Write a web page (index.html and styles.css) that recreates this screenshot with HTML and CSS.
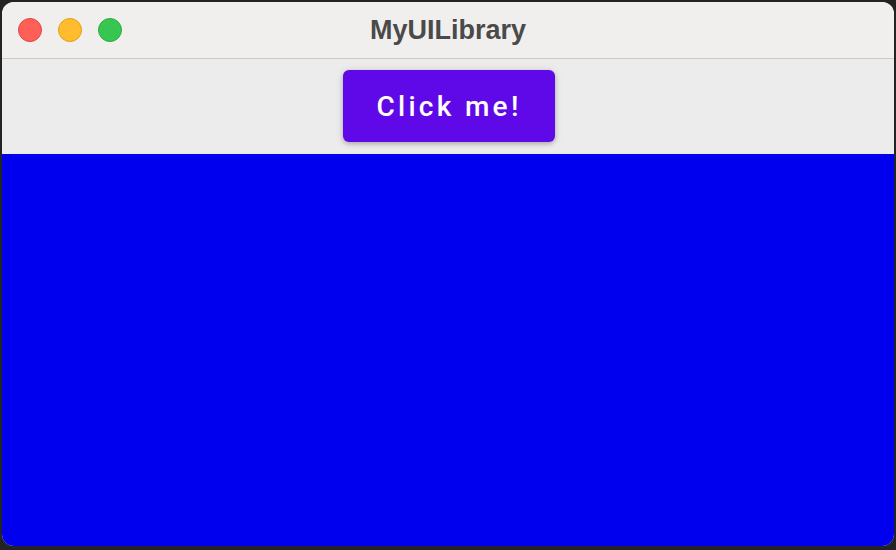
FILE: index.html
```html
<!DOCTYPE html>
<html>
<head>
<meta charset="utf-8">
<link rel="stylesheet" href="styles.css">
</head>
<body>
<div class="window">
  <div class="titlebar">
    <div class="lights">
      <span class="light red"></span>
      <span class="light yellow"></span>
      <span class="light green"></span>
    </div>
    <div class="title">MyUILibrary</div>
  </div>
  <div class="toolbar">
    <button class="btn">Click me!</button>
  </div>
  <div class="content"></div>
</div>
</body>
</html>
```
FILE: styles.css
```css
html, body {
  margin: 0;
  padding: 0;
  width: 896px;
  height: 550px;
  background: #232323;
  overflow: hidden;
}
body {
  padding: 2px 2px 4px 2px;
  box-sizing: border-box;
}
.window {
  width: 892px;
  height: 544px;
  border-radius: 12px;
  overflow: hidden;
  display: flex;
  flex-direction: column;
  background: #ececec;
}
.titlebar {
  height: 56px;
  flex: none;
  background: #f0efed;
  border-bottom: 1px solid #c9c9c9;
  position: relative;
  display: flex;
  align-items: center;
  justify-content: center;
}
.lights {
  position: absolute;
  left: 16px;
  top: 16px;
  display: flex;
  gap: 16px;
}
.light {
  width: 24px;
  height: 24px;
  border-radius: 50%;
  box-sizing: border-box;
}
.red { background: #ff5f57; border: 1px solid #e14640; }
.yellow { background: #febc2e; border: 1px solid #e1a116; }
.green { background: #38c653; border: 1px solid #2aac3f; }
.title {
  font-family: "Liberation Sans", Arial, sans-serif;
  font-weight: bold;
  font-size: 27px;
  color: #4a4a4a;
  margin-left: 0;
  padding-top: 0;
}
.toolbar {
  height: 95px;
  flex: none;
  display: flex;
  justify-content: center;
  align-items: flex-start;
  padding-top: 11px;
  box-sizing: border-box;
}
.btn {
  width: 212px;
  height: 72px;
  margin-left: 2px;
  border: none;
  border-radius: 6px;
  background: #6009e8;
  color: #ffffff;
  font-family: Roboto, "Liberation Sans", sans-serif;
  font-weight: 500;
  font-size: 28px;
  letter-spacing: 3.3px;
  box-shadow: 0 2px 4px rgba(0,0,0,0.2), 0 1px 8px rgba(0,0,0,0.12);
  padding: 0;
}
.content {
  flex: 1;
  background: #0000ee;
}
```
